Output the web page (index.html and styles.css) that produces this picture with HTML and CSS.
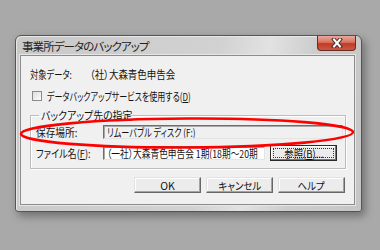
FILE: index.html
```html
<!DOCTYPE html>
<html lang="ja">
<head>
<meta charset="utf-8">
<link rel="stylesheet" href="styles.css">
</head>
<body>
<div class="window">
  <div class="titlebar">
    <span class="title">事業所データのバックアップ</span>
    <span class="close">
      <svg width="14" height="10" viewBox="0 0 14 10">
        <path d="M4 1.5 L10 8.5 M10 1.5 L4 8.5" stroke="#4a2a26" stroke-width="4" stroke-linecap="square"/>
        <path d="M4 1.5 L10 8.5 M10 1.5 L4 8.5" stroke="#ffffff" stroke-width="2" stroke-linecap="square"/>
      </svg>
    </span>
  </div>
  <div class="client">
    <div class="row target">
      <span class="lbl1"><span class="sq s75">対象データ:</span></span>
      <span class="sq s86">（社）大森青色申告会</span>
    </div>
    <div class="row check">
      <span class="box"></span>
      <span class="sq s73">データバックアップサービスを使用する(<u>D</u>)</span>
    </div>
    <fieldset class="group">
      <legend><span class="sq s90">バックアップ先の指定</span></legend>
      <div class="grow">
        <span class="lbl2"><span class="sq s88">保存場所:</span></span>
        <span class="field ro"><span class="sq s74">リムーバブル ディスク (F:)</span></span>
      </div>
      <div class="grow">
        <span class="lbl2"><span class="sq s83">ファイル名(<u>F</u>):</span></span>
        <span class="field short"><span class="sq s79">（一社）大森青色申告会 1期(18期～20期</span></span>
        <span class="btn def"><span class="focus"><span class="sq s90 c">参照(<u>B</u>)...</span></span></span>
      </div>
    </fieldset>
    <div class="buttons">
      <span class="btn">OK</span>
      <span class="btn"><span class="sq s90 c">キャンセル</span></span>
      <span class="btn"><span class="sq s90 c">ヘルプ</span></span>
    </div>
  </div>
</div>
<svg class="mark" width="380" height="250" viewBox="0 0 380 250">
  <ellipse cx="187" cy="133" rx="166" ry="14.5" fill="none" stroke="#ff0000" stroke-width="2.6" transform="rotate(-0.3 187 133)"/>
</svg>
</body>
</html>
```
FILE: styles.css
```css
html, body {
  margin: 0;
  padding: 0;
}
body {
  width: 380px;
  height: 250px;
  overflow: hidden;
  background: #a9a9a9;
  font-family: "Noto Sans CJK JP", "Noto Sans", sans-serif;
  font-feature-settings: "palt";
  font-size: 11px;
  color: #111;
  position: relative;
}
u { text-decoration: underline; }
.sq {
  display: inline-block;
  white-space: nowrap;
  transform-origin: left center;
}
.sq.c { transform-origin: center center; }
.s73 { transform: scaleX(0.73); }
.s74 { transform: scaleX(0.74); }
.s75 { transform: scaleX(0.75); }
.s79 { transform: scaleX(0.79); }
.s83 { transform: scaleX(0.83); }
.s86 { transform: scaleX(0.86); }
.s88 { transform: scaleX(0.88); }
.s90 { transform: scaleX(0.90); }
.window {
  margin: 35px 0 0 15px;
  width: 347px;
  height: 177px;
  box-sizing: border-box;
  border: 1px solid #555;
  border-radius: 6px 6px 3px 3px;
  background: linear-gradient(100deg, #c9c9c9 0%, #d2d2d2 55%, #e2e2e2 68%, #cdcdcd 80%, #c6c6c6 100%);
  box-shadow: 3px 4px 9px rgba(0,0,0,0.35), inset 1px 1px 0 #e8e8e8;
  padding: 0 6px 6px 4px;
  display: flex;
  flex-direction: column;
}
.titlebar {
  height: 19px;
  display: flex;
  align-items: flex-start;
  justify-content: space-between;
}
.title {
  margin: 3px 0 0 2px;
  font-size: 11.5px;
  line-height: 14px;
  color: #222;
  letter-spacing: -0.9px;
}
.close {
  width: 37px;
  height: 14px;
  margin: -1px -1px 0 0;
  border: 1px solid #6a2b24;
  border-top-color: #8a3a30;
  border-radius: 0 0 4px 4px;
  background: linear-gradient(#e8a99c 0%, #d9725f 45%, #c13a25 55%, #c95a42 100%);
  display: flex;
  align-items: center;
  justify-content: center;
}
.close svg { display: block; }
.client {
  flex: 1;
  background: #f0f0f0;
  border: 1px solid #8c8c8c;
  box-shadow: 0 0 0 1px #e6e6e6;
  display: flex;
  flex-direction: column;
}
.row {
  display: flex;
  align-items: center;
  height: 14px;
  padding-left: 9px;
}
.target { margin-top: 11px; }
.lbl1 { width: 60px; }
.check { margin-top: 8px; padding-left: 11px; }
.box {
  width: 8px;
  height: 8px;
  border: 1px solid #8b8b8b;
  background: linear-gradient(135deg, #dcdcdc, #fdfdfd);
  margin-right: 5px;
}
.group {
  margin: 6px 8px 0 9px;
  padding: 3px 2px 7px 5px;
  border: 1px solid #bdbdbd;
  box-shadow: inset 1px 1px 0 #fff, 1px 1px 0 #fff;
}
.group legend {
  padding: 0 2px;
  margin-left: 3px;
  line-height: 12px;
  width: 76px;
}
.grow {
  display: flex;
  align-items: center;
  height: 16px;
  margin-top: 5px;
}
.grow:first-of-type { margin-top: 0; }
.lbl2 { width: 67px; }
.field {
  height: 12px;
  line-height: 12px;
  box-sizing: content-box;
  border: 1px solid;
  border-color: #6e6e6e #e4e4e4 #e4e4e4 #6e6e6e;
  box-shadow: inset 1px 1px 0 #a8a8a8;
  padding: 0 2px 0 3px;
  white-space: nowrap;
  overflow: hidden;
  flex: 1;
}
.ro { background: #f0f0f0; }
.short {
  flex: none;
  background: #fff;
  padding-right: 0;
  width: 157px;
}
.btn {
  width: 67px;
  height: 16px;
  box-sizing: border-box;
  display: flex;
  align-items: center;
  justify-content: center;
  background: #ececec;
  border: 1px solid;
  border-color: #e2e2e2 #676767 #676767 #e2e2e2;
  box-shadow: inset -1px -1px 0 #a3a3a3, inset 1px 1px 0 #fff;
  font-size: 10.5px;
}
.def {
  margin-left: 5px;
  border: 1px solid #2a2a2a;
  box-shadow: inset -1px -1px 0 #777, inset 1px 1px 0 #fff;
  padding: 2px;
}
.focus {
  flex: 1;
  align-self: stretch;
  display: flex;
  align-items: center;
  justify-content: center;
  outline: 1px dotted #333;
  outline-offset: -1px;
}
.buttons {
  display: flex;
  justify-content: flex-end;
  gap: 5px;
  margin: 8px 9px 0 0;
}
.mark {
  position: absolute;
  left: 0;
  top: 0;
  pointer-events: none;
}
```
